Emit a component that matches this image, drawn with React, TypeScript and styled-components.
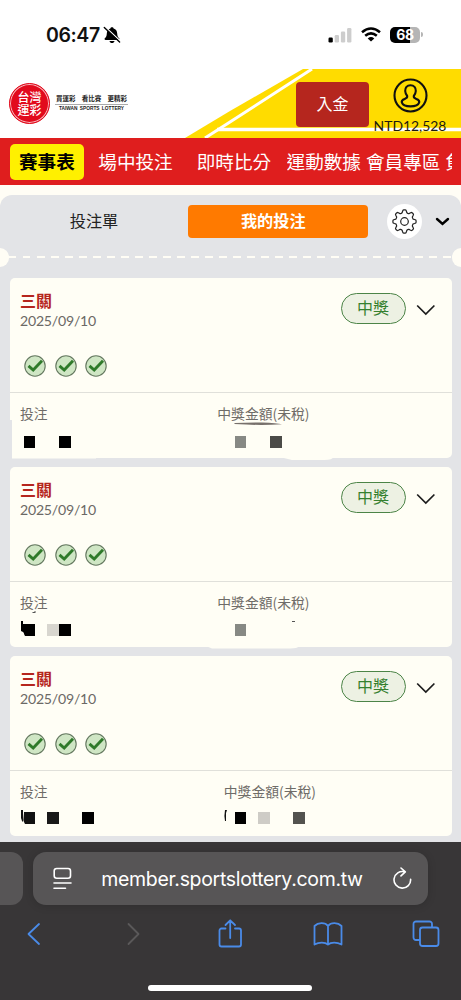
import React from "react";
import styled, { createGlobalStyle } from "styled-components";

const GlobalStyle = createGlobalStyle`
  * { box-sizing: border-box; }
  body { margin: 0; background: #fff; font-family: Lato, "Noto Sans CJK TC", sans-serif; }
`;

const Screen = styled.div`
  width: 461px;
  height: 1000px;
  overflow: hidden;
  display: flex;
  flex-direction: column;
  background: #fffdf5;
`;

const StatusBar = styled.div`
  height: 69px;
  flex: none;
  display: flex;
  justify-content: space-between;
  background: #fff;
  padding: 22px 38px 0 46px;
`;

const StatusGroup = styled.div<{ $gap: number }>`
  display: flex;
  align-items: center;
  gap: ${(p) => p.$gap}px;
  height: 25px;
`;

const Clock = styled.span`
  font: 600 19.5px/24px Inter, sans-serif;
  letter-spacing: -0.4px;
  color: #111;
`;

const Battery = styled.div`
  width: 30px;
  height: 16px;
  border-radius: 5px;
  background: linear-gradient(90deg, #000 68%, #b5b5b5 68%);
  color: #fff;
  font: 700 14px/16px Inter, sans-serif;
  letter-spacing: -0.4px;
  text-align: center;
`;

const BatteryTip = styled.div`
  width: 2px;
  height: 5px;
  border-radius: 0 2px 2px 0;
  background: #b5b5b5;
`;

const Header = styled.header`
  position: relative;
  height: 69px;
  flex: none;
  display: flex;
  background: #fff;
`;

const HeaderArt = styled.svg`
  position: absolute;
  inset: 0;
`;

const Brand = styled.div`
  display: flex;
  width: 296px;
  padding: 14px 0 0 9px;
  gap: 5px;
  z-index: 1;
`;

const Seal = styled.div`
  width: 41px;
  height: 41px;
  border-radius: 50%;
  background: #e20a1c;
  border: 1px solid #e20a1c;
  box-shadow: inset 0 0 0 1px #f8b9bd;
  color: #fff;
  font: 500 12px/13px "Noto Sans CJK TC", sans-serif;
  text-align: center;
  padding-top: 6px;
`;

const Slogan = styled.div`
  width: 73px;
  padding-top: 11px;
  color: #222;
`;

const SloganZh = styled.div`
  display: flex;
  justify-content: space-between;
  font: 700 6.5px/9px "Noto Sans CJK TC", sans-serif;
  border-bottom: 1px solid #aaa;
  padding: 0 1px 1px;
  height: 11px;
`;

const SloganEn = styled.div`
  font: 700 4.8px/8px "Liberation Sans", sans-serif;
  text-align: center;
  white-space: nowrap;
  word-spacing: 1px;
`;

const DepositButton = styled.button`
  width: 73px;
  height: 45px;
  margin: 12.5px 0 0;
  padding: 0 0 2px;
  border: 0;
  border-radius: 4px;
  background: #b5261e;
  color: #fff;
  font: 400 16px/43px "Noto Sans CJK TC", sans-serif;
  z-index: 1;
`;

const Account = styled.div`
  width: 82px;
  display: flex;
  flex-direction: column;
  align-items: center;
  padding-top: 8.5px;
  z-index: 1;
`;

const Balance = styled.div`
  font: 400 13.9px/16px Lato, sans-serif;
  color: #1c1a10;
  margin-top: 5px;
  white-space: nowrap;
`;

const Nav = styled.nav`
  height: 47px;
  flex: none;
  display: flex;
  align-items: center;
  background: #df1e1e;
  padding: 0 0 0 9.5px;
  overflow: hidden;
  font: 400 18.6px/34px "Noto Sans CJK TC", sans-serif;
  color: #fff;
`;

const NavItem = styled.a<{ $before?: number; $active?: boolean; $clip?: number }>`
  flex: none;
  margin-left: ${(p) => p.$before ?? 0}px;
  white-space: nowrap;
  height: 36px;
  overflow: hidden;
  ${(p) => p.$clip && `width: ${p.$clip}px;`}
  ${(p) => p.$active && `
    padding: 0 9.5px;
    border-radius: 5px;
    background: #fff000;
    color: #000;
    font-weight: 700;
  `}
`;

const Panel = styled.main`
  margin-top: 10px;
  height: 647px;
  flex: none;
  background: #e3e4e7;
  border-radius: 12px 12px 0 0;
  display: flex;
  flex-direction: column;
`;

const TabBar = styled.div`
  display: flex;
  align-items: center;
  height: 52px;
  font: 400 16.2px/31px "Noto Sans CJK TC", sans-serif;
  color: #222;
`;

const Tab = styled.div<{ $active?: boolean }>`
  height: 33px;
  width: ${(p) => (p.$active ? 179.5 : 188)}px;
  text-align: center;
  ${(p) => p.$active && "padding-right: 9px; background: #ff7a00; color: #fff; font-weight: 700; border-radius: 4px;"}
`;

const GearButton = styled.div`
  width: 35px;
  height: 35px;
  margin-left: 19px;
  margin-right: 13px;
  border-radius: 50%;
  background: #fff;
  display: grid;
  place-items: center;
`;

const Perforation = styled.div`
  height: 20px;
  display: flex;
  align-items: center;
  justify-content: space-between;
`;

const Notch = styled.i<{ $right?: boolean }>`
  width: 9px;
  height: 19px;
  background: #fffdf5;
  border-radius: ${(p) => (p.$right ? "10px 0 0 10px" : "0 10px 10px 0")};
`;

const Dashes = styled.i`
  flex: 1;
  height: 2.5px;
  background: repeating-linear-gradient(90deg, #fffdf5 0 7.5px, transparent 7.5px 14px);
`;

const Cards = styled.section`
  display: flex;
  flex-direction: column;
  gap: 9px;
  padding: 11px 9px 0 9.5px;
`;

const Card = styled.article`
  position: relative;
  height: 180px;
  border-radius: 5px;
  background: #fffef5;
`;

const CardHead = styled.div`
  height: 115px;
  border-bottom: 1px solid #e0e0da;
  padding: 10.5px 15px 0 10.5px;
  display: flex;
  justify-content: space-between;
`;

const CardTitle = styled.h3`
  margin: 0;
  font: 700 16px/22px "Noto Sans CJK TC", sans-serif;
  color: #b5261e;
`;

const CardDate = styled.div`
  margin-top: 1.5px;
  font: 400 14.1px/18px Lato, sans-serif;
  letter-spacing: -0.22px;
  color: #6b6965;
`;

const Checks = styled.div`
  display: flex;
  gap: 8.6px;
  padding: 25px 0 0 4px;
`;

const CardActions = styled.div`
  display: flex;
  align-items: center;
  gap: 9.5px;
  height: 40px;
`;

const WinBadge = styled.div`
  width: 65px;
  height: 31px;
  border: 1.3px solid #4c8447;
  border-radius: 16px;
  background: #edf1e3;
  color: #35802f;
  font: 400 16px/27px "Noto Sans CJK TC", sans-serif;
  text-align: center;
`;

const CardFoot = styled.div`
  display: flex;
  padding: 10px 0 0 10.5px;
`;

const Figure = styled.div<{ $width?: number }>`
  width: ${(p) => p.$width ?? 200}px;
  font: 400 13.8px/20px "Noto Sans CJK TC", sans-serif;
  color: #6f6c68;
`;

const FigureLabel = styled.div<{ $shift?: number }>`
  margin-left: ${(p) => p.$shift ?? 0}px;
`;

const Mosaic = styled.div<{ $indent: number; $gap: number }>`
  display: flex;
  margin: ${(p) => p.$gap}px 0 0 ${(p) => p.$indent}px;
`;

const Cell = styled.i<{ $tone: string }>`
  width: 11.75px;
  height: 12px;
  background: ${(p) => p.$tone};
`;

const Marks = styled.svg`
  position: absolute;
  left: -9.5px;
  top: 0;
  overflow: visible;
`;

const Browser = styled.footer`
  flex: 1;
  background: #383637;
  display: flex;
  flex-direction: column;
`;

const AddressRow = styled.div`
  display: flex;
  gap: 10px;
  padding-top: 10px;
`;

const PreviousTab = styled.div`
  width: 23px;
  height: 53px;
  background: #575556;
  border-radius: 0 12px 12px 0;
`;

const AddressBar = styled.div`
  width: 395px;
  height: 53px;
  border-radius: 13px;
  background: #575556;
  box-shadow: 0 1px 9px rgba(0, 0, 0, 0.15);
  display: flex;
  align-items: center;
  justify-content: space-between;
  padding: 0 16px 0 20px;
  color: #fff;
  font: 400 19.5px/24px Inter, sans-serif;
  letter-spacing: -0.32px;
`;

const Toolbar = styled.div`
  display: flex;
  justify-content: space-between;
  align-items: center;
  height: 58px;
  padding: 0 20px 0 19px;
`;

const HomeIndicator = styled.div`
  width: 164px;
  height: 6px;
  border-radius: 3px;
  background: #fff;
  margin: 22px auto 0 148px;
`;

const Check = () => (
  <svg width="22" height="22" viewBox="0 0 22 22">
    <circle cx="11" cy="11" r="10.2" fill="#cfe6c4" stroke="#64785f" strokeWidth="1.1" />
    <path d="M4.500 10.800l4.700 4.200L18 5.800" fill="none" stroke="#2f7a2a" strokeWidth="2.9" />
  </svg>
);

const gearPath = (() => {
  const points: string[] = [];
  const steps = 96;
  for (let i = 0; i < steps; i++) {
    const a = (i / steps) * Math.PI * 2;
    const wave = Math.tanh(2.1 * Math.cos(8 * a)) / Math.tanh(2.1);
    const r = 10.2 + 1.4 * wave;
    points.push(`${(12.5 + r * Math.cos(a)).toFixed(2)} ${(12.5 + r * Math.sin(a)).toFixed(2)}`);
  }
  return `M${points.join("L")}Z`;
})();

const K = "#000";
const _ = "transparent";

type Bet = {
  stake: string[];
  prize: string[];
  prizeShift: number;
  gap: number;
  marks: React.ReactNode;
};

const bets: Bet[] = [
  {
    stake: [K, _, _, K],
    prize: ["#878984", _, _, "#4b4b47"],
    prizeShift: 0,
    gap: 13,
    marks: (
      <>
        <path d="M9 142H12V181H9Z" fill="#e3e4e7" />
        <path d="M12 178H96V180.5H12Z M280 179L333 179Q333 182 324 182H292Z" fill="#fffef5" />
        <path d="M234.5 145L262 144.4Q277 145 282 146.3Q262 147.5 246 146.5L234.5 146Z" fill="#77706b" />
      </>
    ),
  },
  {
    stake: [K, _, "#d8d6cf", K],
    prize: ["#878984"],
    prizeShift: 0,
    gap: 12,
    marks: (
      <>
        <path d="M21 154h2v3h2v12l-2-4-2-1z" fill="#000" />
        <path d="M23 165v6h3z" fill="#fffef5" />
        <path d="M32.5 145h2v-1h1v2h-3z M292 154h3v1h-3z" fill="#555" />
        <path d="M206 179H300Q297 181.5 290 181.5H212Z" fill="#fffef5" />
      </>
    ),
  },
  {
    stake: ["#111", _, "#191919", _, _, K],
    prize: [K, _, "#ceccc6", _, _, "#53534f"],
    prizeShift: 6.5,
    gap: 11,
    marks: (
      <>
        <path d="M21 154h2v3l1 11-1-2-1-1-1-3z M225 154h2l-1 3v8h-1l-.6-5z" fill="#111" />
        <path d="M23 164v6h3z" fill="#fffef5" />
      </>
    ),
  },
];

const BetCard = ({ bet }: { bet: Bet }) => (
  <Card>
    <CardHead>
      <div>
        <CardTitle>三關</CardTitle>
        <CardDate>2025/09/10</CardDate>
        <Checks>
          <Check />
          <Check />
          <Check />
        </Checks>
      </div>
      <CardActions>
        <WinBadge>中獎</WinBadge>
        <svg width="22" height="14" viewBox="0 0 22 14">
          <path d="M2.2 3.500l8.600 8.500 8.600-8.500" fill="none" stroke="#1c1c1c" strokeWidth="1.7" />
        </svg>
      </CardActions>
    </CardHead>
    <CardFoot>
      <Figure $width={197.3}>
        <FigureLabel>投注</FigureLabel>
        <Mosaic $indent={3.5} $gap={bet.gap}>
          {bet.stake.map((tone, i) => <Cell key={i} $tone={tone} />)}
        </Mosaic>
      </Figure>
      <Figure>
        <FigureLabel $shift={bet.prizeShift}>中獎金額(未稅)</FigureLabel>
        <Mosaic $indent={17.3} $gap={bet.gap}>
          {bet.prize.map((tone, i) => <Cell key={i} $tone={tone} />)}
        </Mosaic>
      </Figure>
    </CardFoot>
    <Marks width="461" height="184">{bet.marks}</Marks>
  </Card>
);

const stroke = { fill: "none", stroke: "#4a8be8", strokeWidth: 1.8, strokeLinecap: "round", strokeLinejoin: "round" } as const;

export default function App() {
  return (
    <Screen>
      <GlobalStyle />
      <StatusBar>
        <StatusGroup $gap={3.5}>
          <Clock>06:47</Clock>
          <svg width="18" height="18" viewBox="0 0 18 18">
            <path d="M9 1.2c.9 0 1.500.5 1.600 1.200 2.400.7 3.500 2.500 3.600 5 .1 2.800.8 3.600 2 4.900.5.6.3 1.700-.8 1.700H2.600c-1.100 0-1.300-1.100-.8-1.700 1.200-1.300 1.900-2.100 2-4.900.1-2.500 1.200-4.300 3.600-5C7.500 1.700 8.100 1.200 9 1.200zM6.500 15h5c-.3 1.400-1.300 2.100-2.500 2.100S6.800 16.400 6.500 15z" fill="#000" />
            <path d="M2.200 1L17.600 15.300" stroke="#fff" strokeWidth="1.500" />
            <path d="M1.300 1.600L16.600 16" stroke="#000" strokeWidth="1.400" strokeLinecap="round" />
          </svg>
        </StatusGroup>
        <StatusGroup $gap={9}>
          <svg width="24" height="16" viewBox="0 0 24 16">
            <rect x="0.500" y="10.500" width="4.300" height="5" rx="1.200" fill="#000" />
            <rect x="6.700" y="8" width="4.300" height="7.500" rx="1.200" fill="#cdcdcd" />
            <rect x="12.900" y="4.500" width="4.300" height="11" rx="1.200" fill="#cdcdcd" />
            <rect x="19.100" y="1" width="4.300" height="14.500" rx="1.200" fill="#cdcdcd" />
          </svg>
          <svg width="20" height="15" viewBox="0 0 20 15">
            <g fill="none" stroke="#000" strokeWidth="2.600">
              <path d="M1 5.200Q10-2.200 19 5.200" />
              <path d="M4.200 8.700Q10 4 15.800 8.700" />
            </g>
            <path d="M6.700 11.400Q10 8.700 13.300 11.400L10 14.600Z" fill="#000" />
          </svg>
          <StatusGroup $gap={1}>
            <Battery>68</Battery>
            <BatteryTip />
          </StatusGroup>
        </StatusGroup>
      </StatusBar>

      <Header>
        <HeaderArt width="461" height="69" viewBox="0 0 461 69">
          <path d="M303 0H461V69H185L230 42Z" fill="#ffdc00" />
          <path d="M312 0L230 53L205 69" fill="none" stroke="#fff" strokeWidth="3" />
          <path d="M217 60.500H461" stroke="#fff" strokeWidth="3.500" />
        </HeaderArt>
        <Brand>
          <Seal>台灣<br />運彩</Seal>
          <Slogan>
            <SloganZh><span>買運彩</span><span>看比賽</span><span>更精彩</span></SloganZh>
            <SloganEn>TAIWAN SPORTS LOTTERY</SloganEn>
          </Slogan>
        </Brand>
        <DepositButton>入金</DepositButton>
        <Account>
          <svg width="35" height="35" viewBox="0 0 35 35" fill="none" stroke="#111" strokeLinejoin="round">
            <circle cx="17.500" cy="17.500" r="16" strokeWidth="2.100" />
            <path d="M17.500 7.200c-3.500 0-5.500 2.500-5.300 5.800.1 2.300 1 3.700 2 5 .4 1.600-.6 2.200-2.500 2.900-2.300.8-3.300 1.900-2.900 3.500.8 2.500 4.500 4 8.700 4s7.900-1.500 8.700-4c.4-1.600-.6-2.700-2.900-3.500-1.900-.7-2.900-1.300-2.500-2.900 1-1.300 1.900-2.700 2-5 .2-3.300-1.800-5.800-5.300-5.800z" strokeWidth="2.100" />
          </svg>
          <Balance>NTD12,528</Balance>
        </Account>
      </Header>

      <Nav>
        <NavItem $active>賽事表</NavItem>
        <NavItem $before={14}>場中投注</NavItem>
        <NavItem $before={24}>即時比分</NavItem>
        <NavItem $before={15.5}>運動數據</NavItem>
        <NavItem $before={5}>會員專區</NavItem>
        <NavItem $before={5} $clip={7}>負</NavItem>
      </Nav>

      <Panel>
        <TabBar>
          <Tab>投注單</Tab>
          <Tab $active>我的投注</Tab>
          <GearButton>
            <svg width="25" height="25" viewBox="0 0 25 25" fill="none" stroke="#222" strokeWidth="1.200">
              <path d={gearPath} />
              <circle cx="12.500" cy="12.500" r="3.800" />
            </svg>
          </GearButton>
          <svg width="15" height="11" viewBox="0 0 15 11">
            <path d="M2 3l5.500 5L13 3" fill="none" stroke="#000" strokeWidth="2.400" strokeLinecap="round" />
          </svg>
        </TabBar>
        <Perforation>
          <Notch />
          <Dashes />
          <Notch $right />
        </Perforation>
        <Cards>
          {bets.map((bet, i) => <BetCard key={i} bet={bet} />)}
        </Cards>
      </Panel>

      <Browser>
        <AddressRow>
          <PreviousTab />
          <AddressBar>
            <svg width="19" height="23" viewBox="0 0 19 23" fill="none" stroke="#fff" strokeWidth="1.600" strokeLinecap="round">
              <rect x="1.200" y="1.500" width="16.300" height="9.800" rx="2.500" />
              <path d="M1 16H18M1 21.200H12.500" />
            </svg>
            <span>member.sportslottery.com.tw</span>
            <svg width="20" height="24" viewBox="0 0 20 24" fill="none" stroke="#fff" strokeWidth="1.600" strokeLinecap="round" strokeLinejoin="round">
              <path d="M12.500 4.800A8.300 8.300 0 1 0 18.600 12.200M9 1l4.300 3.900-4.300 4" />
            </svg>
          </AddressBar>
        </AddressRow>
        <Toolbar>
          <svg width="30" height="30" viewBox="0 0 30 30" {...stroke}>
            <path d="M20 5L9.500 15l10.500 10" />
          </svg>
          <svg width="30" height="30" viewBox="0 0 30 30" {...stroke} stroke="#5b595a">
            <path d="M11.500 5l10 10-10 10" />
          </svg>
          <svg width="30" height="32" viewBox="0 0 30 32" {...stroke}>
            <path d="M10.500 10.500H6.500a2 2 0 0 0-2 2V26.500a2 2 0 0 0 2 2H24a2 2 0 0 0 2-2V12.500a2 2 0 0 0-2-2H20M15.200 20V2.500M10.500 7l4.700-4.700L20 7" />
          </svg>
          <svg width="30" height="28" viewBox="0 0 30 28" {...stroke}>
            <path d="M15 6v18.500C12 22 6 22 1.500 24.500V6C5 2.500 12 2 15 6c3-4 10-3.500 13.500 0v18.500c-4.500-2.500-10.500-2.500-13.500 0" />
          </svg>
          <svg width="30" height="30" viewBox="0 0 30 30" {...stroke}>
            <path d="M8.500 21H5a2.500 2.500 0 0 1-2.500-2.500V5A2.500 2.500 0 0 1 5 2.500H18.500A2.500 2.500 0 0 1 21 5v3" />
            <rect x="9" y="8.500" width="18.500" height="18.500" rx="2.500" />
          </svg>
        </Toolbar>
        <HomeIndicator />
      </Browser>
    </Screen>
  );
}
